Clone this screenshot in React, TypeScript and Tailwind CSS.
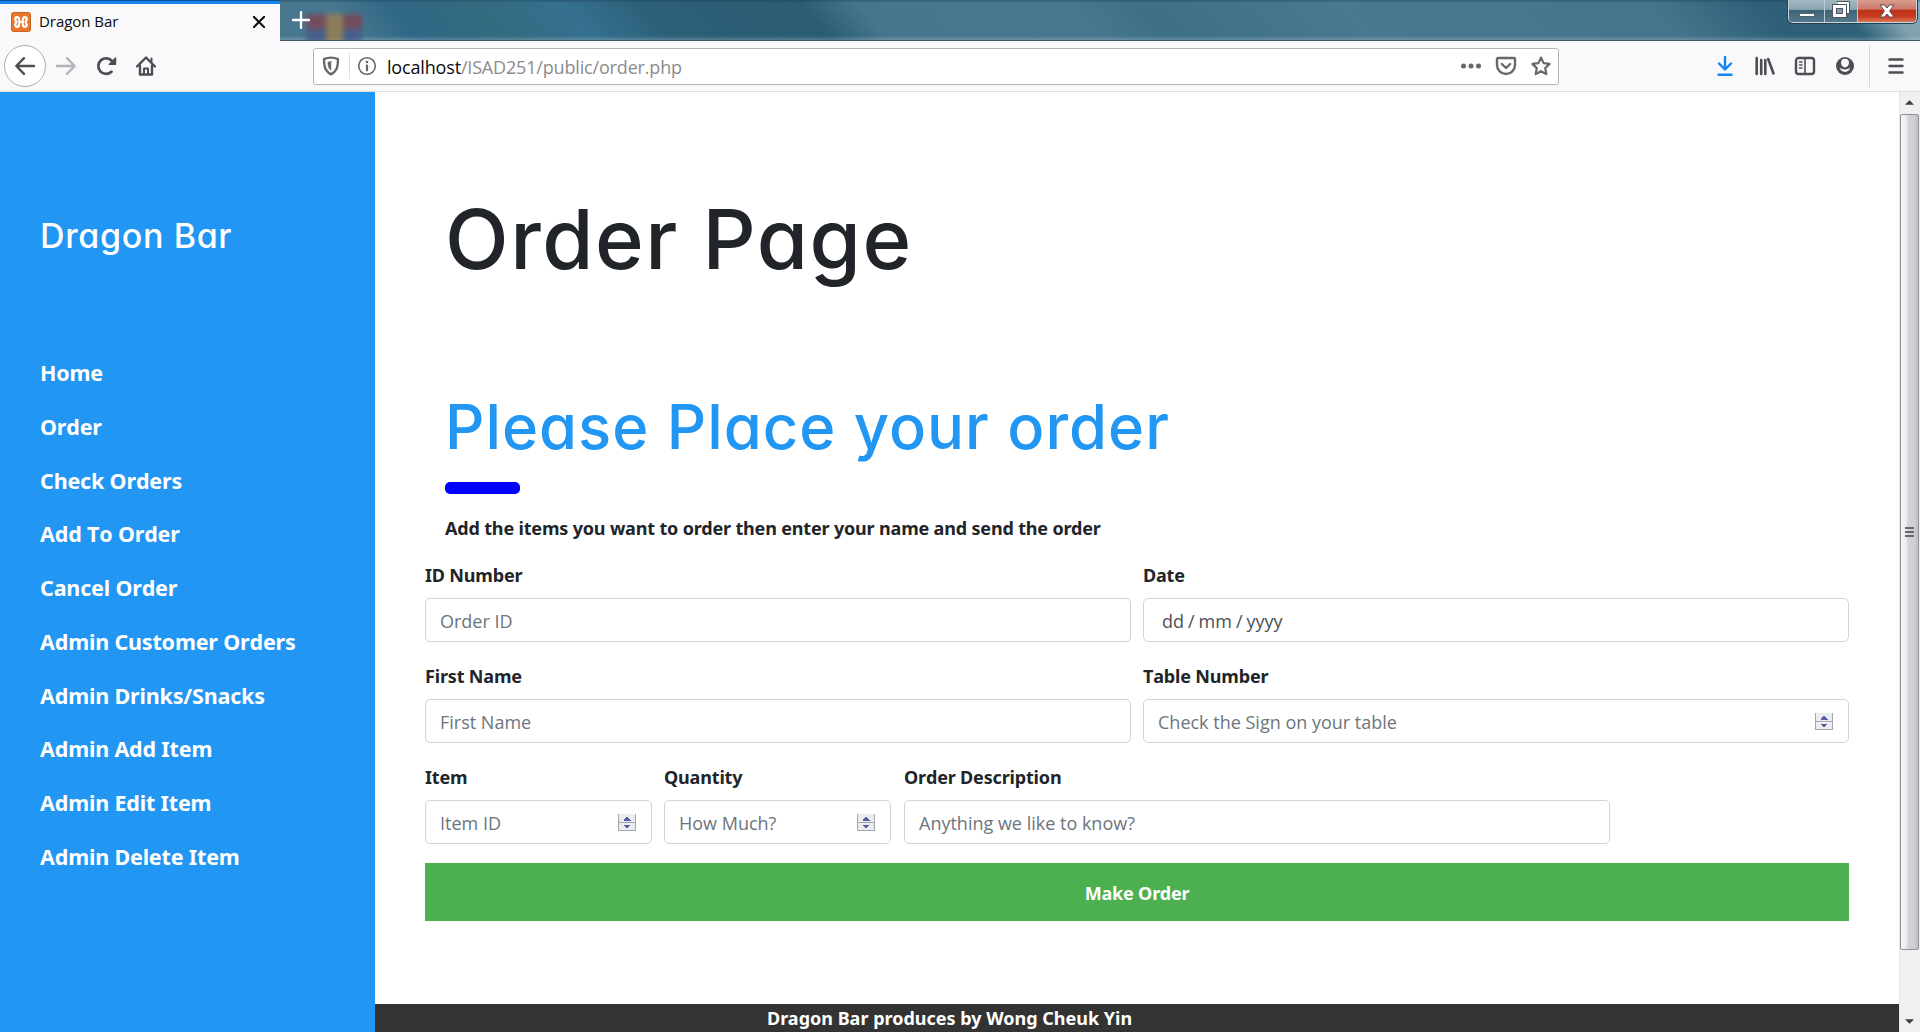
import type { ReactNode } from 'react';

const navItems = [
  'Home',
  'Order',
  'Check Orders',
  'Add To Order',
  'Cancel Order',
  'Admin Customer Orders',
  'Admin Drinks/Snacks',
  'Admin Add Item',
  'Admin Edit Item',
  'Admin Delete Item',
];

function Icon({ children, className = '' }: { children: ReactNode; className?: string }) {
  return (
    <svg
      viewBox="0 0 20 20"
      fill="none"
      stroke="currentColor"
      strokeWidth="2.4"
      strokeLinecap="round"
      strokeLinejoin="round"
      className={`size-5 shrink-0 overflow-visible ${className}`}
    >
      {children}
    </svg>
  );
}

function XamppIcon() {
  return (
    <svg viewBox="0 0 20 20" className="size-5 shrink-0">
      <rect x="0.5" y="0.5" width="19" height="19" rx="2" fill="#e8762b" stroke="#c9661f" />
      <path
        d="M8 7.800V6.800C8 4.600 4.300 4.500 4.300 7.200c0 1.500 1.100 1.800 1.100 2.800s-1.100 1.300-1.100 2.800c0 2.700 3.700 2.600 3.700.4v-1M12 7.800V6.800c0-2.200 3.700-2.300 3.700.4 0 1.500-1.100 1.800-1.100 2.800s1.100 1.300 1.100 2.800c0 2.700-3.700 2.600-3.700.4v-1M8 10h4"
        fill="none"
        stroke="#fff"
        strokeWidth="2.300"
        strokeLinecap="round"
      />
    </svg>
  );
}

function WindowButtons() {
  return (
    <div className="absolute top-0 right-[3px] flex h-[23px] w-[129px] overflow-hidden rounded-b-[5px] border border-t-0 border-[#c5d6de] shadow-[0_0_0_1px_#24414f]">
      <div className="flex w-[36px] items-end justify-center border-r border-[#b8ccd6] bg-[linear-gradient(#a3b7c1_0%,#8ba4b1_43%,#3d6377_46%,#54798b_100%)] pb-[5px]">
        <div className="h-[4px] w-[16px] rounded-[1px] border border-[#55636c] bg-white" />
      </div>
      <div className="flex w-[33px] items-center justify-center border-r border-[#b8ccd6] bg-[linear-gradient(#a3b7c1_0%,#8ba4b1_43%,#3d6377_46%,#54798b_100%)] pb-[3px]">
        <svg viewBox="0 0 18 17" className="h-[17px] w-[18px]">
          <path d="M4.500 0.500h13v12h-3" fill="#fff" stroke="#4e5560" />
          <rect x="0.500" y="3.500" width="14" height="13" fill="#fff" stroke="#4e5560" />
          <rect x="4.500" y="7.500" width="6" height="5" fill="#8a9aa5" stroke="#4e5560" />
        </svg>
      </div>
      <div className="flex flex-1 items-center justify-center bg-[linear-gradient(#d99d90_0%,#cf7768_42%,#bd3018_46%,#c63c1f_75%,#dd7a58_100%)] pb-[1px]">
        <svg viewBox="0 0 16 14" className="h-[14px] w-[16px]">
          <path d="M1 1h4.500l2.500 3 2.500-3H15L10.600 7 15 13h-4.500L8 10l-2.500 3H1l4.400-6z" fill="#fff" stroke="#5b4a52" strokeLinejoin="round" />
        </svg>
      </div>
    </div>
  );
}

function TitleBar() {
  return (
    <div className="relative flex h-[41px] shrink-0 bg-[linear-gradient(48deg,#47788f_0%,#47788f_18.500%,#2f6785_21.500%,#336b80_26%,#35708f_30.500%,#2c6079_34.500%,#2a5c72_42.500%,#46768d_45.500%,#47788f_56%,#3e6f87_60%,#487990_70%,#45758c_86%,#2e6079_91.500%,#2f617a_95.500%,#7d9fae_97.800%,#8ba8b4_100%)]">
      <div className="pointer-events-none absolute inset-0 border-b border-[#3f5765] bg-[linear-gradient(to_bottom,rgba(20,50,70,0.35)_0px,rgba(20,50,70,0)_3px,rgba(255,255,255,0)_36px,rgba(255,255,255,0.2)_40px)]" />
      <div className="relative z-10 flex h-[41px] w-[280px] items-center border-t border-[#0a4e8f] bg-[#f9f9fb] pl-[11px] shadow-[inset_0_3px_0_#1583f0]">
        <div className="mt-[2px]">
          <XamppIcon />
        </div>
        <span className="mt-[1px] ml-[8px] font-['Open_Sans','Noto_Sans',sans-serif] text-[15px] tracking-[-0.050px] text-[#0c0c0d]">Dragon Bar</span>
        <svg viewBox="0 0 12 12" className="mt-[1px] mr-[15px] ml-auto size-3">
          <path d="M0.800 0.800 11.200 11.200M11.200 0.800 0.800 11.200" stroke="#0c0c0d" strokeWidth="2" strokeLinecap="round" />
        </svg>
      </div>
      <div className="absolute top-[10px] left-[302px] h-[30px] w-[66px] overflow-hidden">
        <div className="mt-[4px] ml-[4px] flex h-[30px] w-[56px] flex-col opacity-75 blur-[2.500px]">
          <div className="h-[15px] bg-[#843f4d]" />
          <div className="h-[15px] bg-[#48588a]" />
          <div className="absolute left-[20px] h-[30px] w-[17px] bg-[#a08048]" />
        </div>
      </div>
      <svg viewBox="0 0 18 18" className="relative z-10 mt-[11px] ml-[12px] size-[18px]">
        <path d="M9 1v16M1 9h16" stroke="#fff" strokeWidth="2.300" strokeLinecap="round" />
      </svg>
      <WindowButtons />
    </div>
  );
}

function Toolbar() {
  return (
    <div className="flex h-[51px] shrink-0 items-center border-b border-[#dcdcdf] bg-[#f9f9fb] text-[#4d4d52]">
      <div className="ml-[4px] flex size-[42px] items-center justify-center rounded-full border border-[#adadb0] bg-white">
        <Icon>
          <path d="M19 10H1.500M9 2.200 1.300 10 9 17.800" />
        </Icon>
      </div>
      <Icon className="ml-[10px] text-[#b5b5b9]">
        <path d="M1 10h17.500M11 2.200 18.700 10 11 17.800" />
      </Icon>
      <Icon className="ml-[21px]">
        <path d="M14.500 15.700A7.800 7.800 0 1 1 15.200 5.200" strokeWidth="2.700" />
        <path d="M18.600 1.800v6.500h-6.500z" fill="currentColor" strokeWidth="1.200" />
      </Icon>
      <Icon className="ml-[19px]">
        <path d="M1 10.500 10 1.500l9 9" />
        <path d="M4 9.500v9h12v-9" />
        <path d="M8 18v-5.500h4V18M15.500 2.500v3" strokeWidth="2" />
      </Icon>
      <div className="ml-[157px] flex h-[37px] w-[1246px] items-center rounded-[3px] border border-[#b4b4b6] bg-white text-[#68686c]">
        <Icon className="ml-[7px]">
          <path d="M10 1.600c2.500 0 5 .6 7 1.500 0 6.500-.4 12-7 15.200C3.400 15.100 3 9.600 3 3.100c2-.9 4.500-1.500 7-1.500z" />
          <path d="M10 5.500v8.800C7.300 12.400 6.900 9.500 6.900 6.200c1-.4 2-.7 3.100-.7z" fill="currentColor" strokeWidth="0.500" />
        </Icon>
        <div className="ml-[8px] h-[26px] w-px bg-[#dedee0]" />
        <Icon className="ml-[7px]">
          <circle cx="10" cy="10" r="8.300" strokeWidth="1.600" />
          <path d="M10 9.500v4.800" strokeWidth="2.200" />
          <circle cx="10" cy="6" r="1.300" fill="currentColor" stroke="none" />
        </Icon>
        <div className="mt-[2px] ml-[10px] font-['Open_Sans','Noto_Sans',sans-serif] text-[18px] tracking-[-0.170px] text-[#8b8b8e]">
          <span className="text-[#0c0c0d]">localhost</span>/ISAD251/public/order.php
        </div>
        <Icon className="ml-auto">
          <g fill="currentColor" stroke="none">
            <circle cx="2.500" cy="10" r="2.500" />
            <circle cx="10" cy="10" r="2.500" />
            <circle cx="17.500" cy="10" r="2.500" />
          </g>
        </Icon>
        <Icon className="ml-[15px]">
          <path d="M1.800 2h16.400a.8.800 0 0 1 .8.800V9a9 9 0 0 1-18 0V2.800a.8.800 0 0 1 .8-.8z" />
          <path d="M5.800 8 10 12l4.200-4" />
        </Icon>
        <Icon className="mr-[7px] ml-[15px]">
          <path d="m10 1.600 2.600 5.500 6 .8-4.400 4.200 1.100 6L10 15.200l-5.300 2.900 1.100-6L1.400 7.900l6-.8z" strokeWidth="2.200" />
        </Icon>
      </div>
      <Icon className="ml-[156px] text-[#1283f3]">
        <path d="M10 1v12M4 7.500l6 6 6-6M3.500 18.700h13" />
      </Icon>
      <Icon className="ml-[20px]">
        <path d="M1.700 2v16M6.200 4v14M10.300 4v14M13.200 3l5.300 14.500" strokeWidth="2.600" />
      </Icon>
      <Icon className="ml-[20px]">
        <rect x="1" y="2" width="18" height="16" rx="2.500" />
        <path d="M10 3v14" strokeWidth="1.600" />
        <path d="M4.500 6h2.500M4.500 9h2.500M4.500 12h2.500" strokeWidth="1.400" />
      </Icon>
      <Icon className="ml-[20px]">
        <circle cx="10" cy="10" r="9" fill="currentColor" stroke="none" />
        <path d="M6 6.800a4 4 0 0 1 8 0c0 2.600-1.800 4.600-4 4.600s-4-2-4-4.600z" fill="#f9f9fb" stroke="none" />
        <path d="M4.600 11.600c.6 2.600 2.800 4.400 5.400 4.400s4.800-1.800 5.400-4.400c-1.400 1.300-3.200 2-5.400 2s-4-.7-5.400-2z" fill="#f9f9fb" stroke="none" />
      </Icon>
      <div className="ml-[14px] h-[41px] w-px bg-[#d4d4d7]" />
      <Icon className="ml-[16px]">
        <path d="M3.500 3.500h13M3.500 10h13M3.500 16.500h13" />
      </Icon>
    </div>
  );
}

function Sidebar() {
  return (
    <nav className="w-[375px] shrink-0 bg-[#2196f3] pl-[40px] text-white">
      <h3 className="mt-[124px] font-['Inter',sans-serif] text-[34px] leading-[40px] font-[450] tracking-[0.650px] [font-feature-settings:'cv11'_1]">Dragon Bar</h3>
      <ul className="mt-[90px] font-['Noto_Sans',sans-serif] text-[21.500px] font-bold tracking-[-0.170px] [font-kerning:none]">
        {navItems.map((item) => (
          <li key={item} className="h-[53.780px] leading-[53.780px]">
            {item}
          </li>
        ))}
      </ul>
    </nav>
  );
}

function Spinner() {
  return (
    <svg viewBox="0 0 18 17" className="mt-[1px] mr-[15px] h-[17px] w-[18px]" shapeRendering="crispEdges">
      <rect x="0" y="0" width="18" height="17" fill="#ececee" />
      <path d="M0.500 0v16.500h17V0" fill="none" stroke="#a3a5b0" />
      <path d="M0 8.500h18" stroke="#a5a7b0" strokeWidth="1.500" />
      <path d="M9 2.500 12.500 6.500h-7zM9 15 5.500 11h7z" fill="#5560a8" />
    </svg>
  );
}

type FieldProps = { label: string; placeholder: string; width: string; spinner?: boolean; date?: boolean };

function Field({ label, placeholder, width, spinner, date }: FieldProps) {
  return (
    <div className={`h-[101px] shrink-0 ${width}`}>
      <label className="block font-['Noto_Sans',sans-serif] text-[18px] leading-[27px] font-bold tracking-[-0.170px] [font-kerning:none]">{label}</label>
      <div className="mt-[9px] flex h-[44px] items-center justify-between rounded-[5px] border border-[#ced4da] bg-white">
        <span
          className={`pt-[2px] font-['Open_Sans','Noto_Sans',sans-serif] text-[18px] ${date ? 'pl-[18px] text-[#495057] [word-spacing:-0.700px]' : 'pl-[14px] text-[#6c757d]'}`}
        >
          {placeholder}
        </span>
        {spinner && <Spinner />}
      </div>
    </div>
  );
}

function Scrollbar() {
  return (
    <div className="flex w-[21px] shrink-0 flex-col items-center border-l border-[#e3e3e3] bg-[#f0f0f0] pr-[1px]">
      <div className="flex h-[22px] items-center pb-[1px]">
        <svg viewBox="0 0 10 5" className="h-[5px] w-[9px]">
          <path d="M5 0l5 5H0z" fill="#3c3c3c" />
        </svg>
      </div>
      <div className="flex h-[836px] w-[19px] flex-col items-center justify-center gap-[2px] rounded-[2px] border border-[#929298] bg-[linear-gradient(to_right,#f6f6f6_0%,#e9e9eb_35%,#d4d4d7_40%,#cfcfd3_80%,#bdbdc2_100%)]">
        <div className="h-[2px] w-[9px] bg-[#68686b]" />
        <div className="h-[2px] w-[9px] bg-[#68686b]" />
        <div className="h-[2px] w-[9px] bg-[#68686b]" />
      </div>
      <div className="mt-auto flex h-[22px] items-center">
        <svg viewBox="0 0 10 5" className="h-[5px] w-[9px]">
          <path d="M0 0h10L5 5z" fill="#3c3c3c" />
        </svg>
      </div>
    </div>
  );
}

export default function App() {
  return (
    <div className="flex h-[1032px] w-[1920px] flex-col overflow-hidden bg-white">
      <TitleBar />
      <Toolbar />
      <div className="flex min-h-0 flex-1">
        <Sidebar />
        <div className="flex min-w-0 flex-1 flex-col text-[#212529]">
          <main className="flex-1 pl-[50px]">
            <div className="pl-[20px]">
              <h1 className="mt-[99px] font-['Inter',sans-serif] text-[83px] leading-[96px] font-medium tracking-[1.500px] [font-feature-settings:'cv11'_1]">
                Order Page
              </h1>
              <h2 className="mt-[104px] font-['Inter',sans-serif] text-[61.500px] leading-[72px] font-medium tracking-[1px] text-[#2196f3] [font-feature-settings:'cv11'_1]">
                Please Place your order
              </h2>
              <div className="mt-[19px] h-[12px] w-[75px] rounded-[5px] bg-[#0000ff]" />
              <p className="mt-[20px] font-['Noto_Sans',sans-serif] text-[18px] leading-[28px] font-bold tracking-[-0.170px]">
                Add the items you want to order then enter your name and send the order
              </p>
            </div>
            <div className="mt-[20px] flex gap-[12px]">
              <Field label="ID Number" placeholder="Order ID" width="w-[706px]" />
              <Field label="Date" placeholder="dd / mm / yyyy" width="w-[706px]" date />
            </div>
            <div className="flex gap-[12px]">
              <Field label="First Name" placeholder="First Name" width="w-[706px]" />
              <Field label="Table Number" placeholder="Check the Sign on your table" width="w-[706px]" spinner />
            </div>
            <div className="flex gap-[12px]">
              <Field label="Item" placeholder="Item ID" width="w-[227px]" spinner />
              <Field label="Quantity" placeholder="How Much?" width="w-[227px]" spinner />
              <Field label="Order Description" placeholder="Anything we like to know?" width="w-[707px] pl-px" />
            </div>
            <button className="mt-[-2px] flex h-[58px] w-[1424px] items-center justify-center bg-[#4caf50] pt-[2px] font-['Noto_Sans',sans-serif] text-[18px] font-bold tracking-[-0.170px] text-white">
              Make Order
            </button>
          </main>
          <footer className="h-[28px] shrink-0 bg-[#333333] pl-[392px] font-['Noto_Sans',sans-serif] text-[18px] leading-[28px] font-bold text-white">
            Dragon Bar produces by Wong Cheuk Yin
          </footer>
        </div>
        <Scrollbar />
      </div>
    </div>
  );
}
